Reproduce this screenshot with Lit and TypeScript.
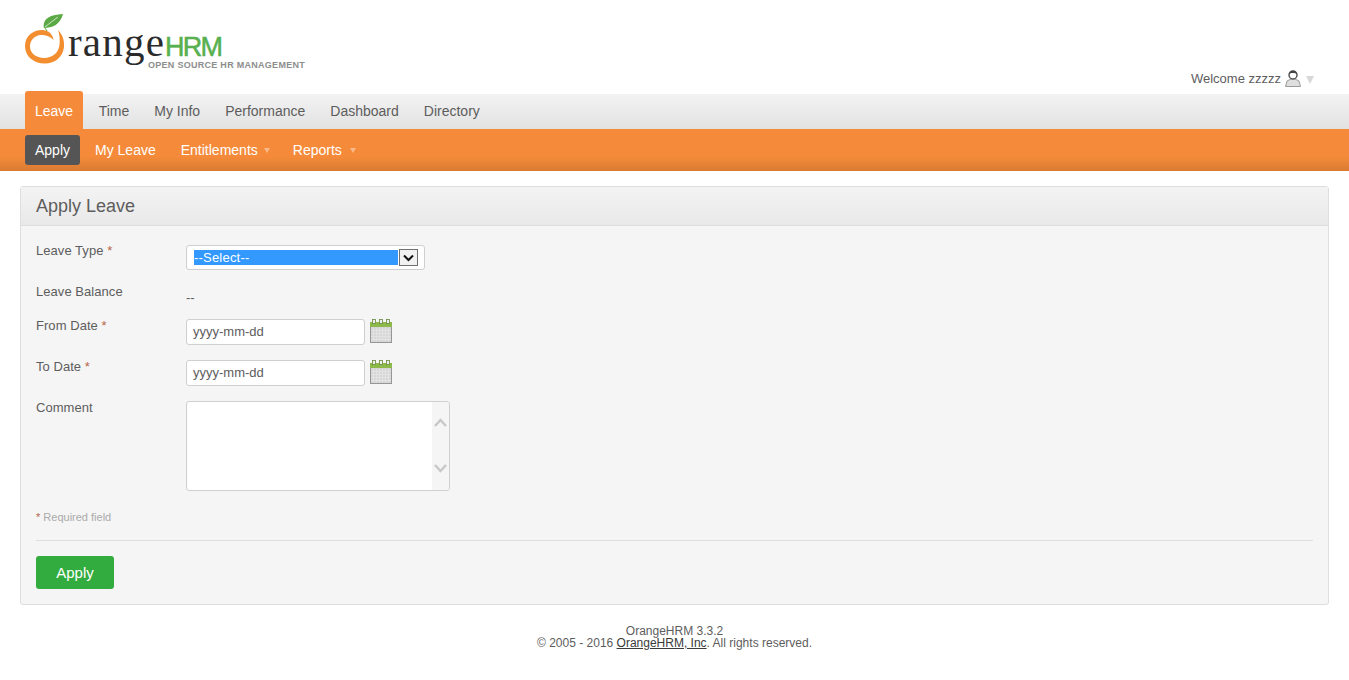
import { css, html, LitElement, svg } from 'lit';
import { customElement } from 'lit/decorators.js';

const topMenu = ['Time', 'My Info', 'Performance', 'Dashboard', 'Directory'];

const logo = svg`
  <svg class="logo" width="290" height="64" viewBox="0 0 290 64">
    <path d="M38 1C30 1.500 21 3 19 10 18.500 12 18.500 13.500 19 15 27 15 35 12 38 1Z" fill="#5aa945"/>
    <path d="M20 14C25 10 29 7 33 4" fill="none" stroke="#fff" stroke-width=".7"/>
    <path d="M20 15 22 18" fill="none" stroke="#5aa945" stroke-width="1"/>
    <path d="M33 17C38 22 39.500 28 39 34 38 44 30 50.500 20 50.500 8 50.500 0 43 0 33 0 23 8 17 17 17 23 17 28 21 28.500 27 25 23 20 21.500 15 22 9 23 5 27.500 5 33.500 5 40 11 45 19 45 27 45 33.500 40 34.500 32 35 26 34.500 21 33 17Z" fill="#f28e2f"/>
    <text x="43" y="43" class="wordmark">range</text>
    <text x="140" y="43" class="hrm">HRM</text>
    <text x="123" y="55" class="tagline">OPEN SOURCE HR MANAGEMENT</text>
  </svg>
`;

const calendar = svg`
  <svg class="cal" width="22" height="24" viewBox="0 0 22 24">
    <rect x=".5" y="4.500" width="21" height="19" fill="#d6d6d6" stroke="#969696"/>
    <g stroke="#e3e3e3" stroke-width="1">
      <path d="M3.500 9v13M6.500 9v13M9.500 9v13M12.500 9v13M15.500 9v13M18.500 9v13M1 11.500h20M1 14.500h20M1 17.500h20M1 20.500h20"/>
    </g>
    <rect x="0" y="3" width="22" height="5" fill="#8db84a"/>
    <g fill="#efefef" stroke="#66883a" stroke-width=".8">
      <rect x="2.500" y=".5" width="3" height="4"/>
      <rect x="9.500" y=".5" width="3" height="4"/>
      <rect x="16.500" y=".5" width="3" height="4"/>
    </g>
  </svg>
`;

@customElement('app-root')
export class AppRoot extends LitElement {
  static override styles = css`
    :host {
      display: block;
      min-height: 680px;
      background: #fff;
      font-family: 'Liberation Sans', Arial, sans-serif;
      color: #5d5d5d;
    }
    .branding {
      height: 94px;
      display: flex;
      justify-content: space-between;
      padding: 13px 35px 0 25px;
      box-sizing: border-box;
    }
    .logo { display: block; }
    .wordmark { font: 41px 'Liberation Serif', serif; fill: #2b2b2b; letter-spacing: 1.200px; }
    .hrm { font: 400 27px 'Liberation Sans', sans-serif; fill: #58b04f; stroke: #58b04f; stroke-width: 0.5px; letter-spacing: -1.700px; }
    .tagline { font: 700 9px 'Liberation Sans', sans-serif; fill: #8d8d8d; letter-spacing: 0.28px; }
    .welcome {
      align-self: flex-end;
      display: flex;
      align-items: center;
      gap: 4px;
      font-size: 13px;
      height: 20px;
      margin-bottom: 6px;
    }
    .arrow-grey {
      width: 0; height: 0;
      margin-left: 1px;
      margin-top: 3px;
      border-left: 4px solid transparent;
      border-right: 4px solid transparent;
      border-top: 8px solid #d8d8d8;
    }
    .top-menu {
      height: 35px;
      background: linear-gradient(#f3f3f3, #e2e2e2);
      display: flex;
      padding-left: 25px;
      font-size: 14px;
    }
    .top-item {
      padding: 0 12.500px;
      line-height: 35px;
      color: #5d5d5d;
    }
    .top-item.active {
      margin-top: -3px;
      height: 38px;
      line-height: 41px;
      padding: 0 10px;
      margin-right: 3px;
      background: #f58b3a;
      color: #fff;
      border-radius: 3px 3px 0 0;
    }
    .sub-menu {
      height: 42px;
      background: linear-gradient(#f58b3a 0, #f58b3a 65%, #d97b32 100%);
      display: flex;
      align-items: flex-start;
      padding: 6px 0 0 25px;
      box-sizing: border-box;
      font-size: 14px;
      color: #fff;
    }
    .sub-item {
      height: 30px;
      line-height: 30px;
      padding: 0 10px 0 15px;
      display: flex;
      align-items: center;
      gap: 6px;
    }
    .sub-item.active {
      background: #555;
      border-radius: 3px;
      padding: 0 10px;
    }
    .sub-item.wide-gap { gap: 8px; }
    .drop {
      width: 0; height: 0;
      margin-right: -2px;
      border-left: 3px solid transparent;
      border-right: 3px solid transparent;
      border-top: 5px solid #f9b98a;
    }
    .panel {
      margin: 15px 20px 0;
      height: 419px;
      box-sizing: border-box;
      border: 1px solid #dedede;
      border-radius: 3px;
      background: #f5f5f5;
    }
    .panel-head {
      height: 39px;
      box-sizing: border-box;
      padding-left: 15px;
      line-height: 38px;
      font-size: 18px;
      color: #5d5d5d;
      background: linear-gradient(#f3f3f3, #e9e9e9);
      border-bottom: 1px solid #dedede;
    }
    .panel-body { padding: 19px 15px 0; font-size: 13px; }
    .row { display: grid; grid-template-columns: 150px 1fr; }
    .row label { line-height: 13px; letter-spacing: 0.05px; }
    .row label.first { margin-top: -1px; }
    .req { color: #b5654a; }
    .select {
      width: 239px;
      height: 25px;
      box-sizing: border-box;
      border: 1px solid #cfcfcf;
      border-radius: 3px;
      background: #fff;
      display: flex;
      align-items: center;
      padding-left: 7px;
    }
    .select-text {
      width: 204px;
      height: 15px;
      line-height: 15px;
      background: #3399ff;
      color: #fff;
      font-size: 13px;
      letter-spacing: 0.2px;
    }
    .select-btn {
      width: 19px;
      height: 17px;
      margin-left: 1px;
      box-sizing: border-box;
      border: 1px solid #707070;
      background: #f2f2f2;
      display: flex;
      align-items: center;
      justify-content: center;
    }
    .balance { height: 49px; }
    .balance label { padding-top: 15px; }
    .balance span { padding-top: 20px; line-height: 15px; }
    .field { display: flex; gap: 5px; }
    .date { height: 26px; margin-bottom: 15px; }
    .date input {
      width: 179px;
      height: 26px;
      box-sizing: border-box;
      border: 1px solid #cfcfcf;
      border-radius: 3px;
      padding: 0 6px 2px;
      font: 13px 'Liberation Sans', sans-serif;
      color: #5d5d5d;
      background: #fff;
    }
    .textarea {
      width: 264px;
      height: 90px;
      box-sizing: border-box;
      border: 1px solid #cfcfcf;
      border-radius: 3px;
      background: #fff;
      display: flex;
      justify-content: flex-end;
      overflow: hidden;
    }
    .scroll {
      width: 17px;
      background: #f5f5f5;
      display: flex;
      flex-direction: column;
      justify-content: space-between;
      align-items: center;
      padding: 16px 0 17px;
      box-sizing: border-box;
    }
    .required { margin-top: 20px; font-size: 11px; line-height: 13px; color: #aaa; }
    hr { border: 0; border-top: 1px solid #dedede; margin: 16px 0 15px; }
    .apply {
      display: block;
      width: 78px;
      height: 33px;
      border: 0;
      border-radius: 3px;
      background: #33ac3f;
      color: #fff;
      font: 15px 'Liberation Sans', sans-serif;
      padding: 0;
    }
    footer {
      margin-top: 20px;
      text-align: center;
      font-size: 12px;
      line-height: 12px;
      color: #5d5d5d;
    }
    footer a { color: #3a3a3a; text-decoration: underline; }
  `;

  override render(): unknown {
    return html`
      <div class="branding">
        ${logo}
        <div class="welcome">
          Welcome zzzzz
          <svg width="16" height="18" viewBox="0 0 16 18">
            <path d="M.5 17.500 2 12 6 10H10L14 12 15.500 17.500Z" fill="#dedede" stroke="#9a9a9a"/>
            <circle cx="8" cy="6" r="4" fill="#fff" stroke="#555" stroke-width="1.500"/>
            <path d="M4 5C4 .5 12 .5 12 5 10 3.500 6 3.500 4 5Z" fill="#444"/>
          </svg>
          <span class="arrow-grey"></span>
        </div>
      </div>
      <nav class="top-menu">
        <div class="top-item active">Leave</div>
        ${topMenu.map((item) => html`<div class="top-item">${item}</div>`)}
      </nav>
      <nav class="sub-menu">
        <div class="sub-item active">Apply</div>
        <div class="sub-item">My Leave</div>
        <div class="sub-item">Entitlements<span class="drop"></span></div>
        <div class="sub-item wide-gap">Reports<span class="drop"></span></div>
      </nav>
      <section class="panel">
        <div class="panel-head">Apply Leave</div>
        <div class="panel-body">
          <div class="row">
            <label class="first">Leave Type <span class="req">*</span></label>
            <div class="select">
              <div class="select-text">--Select--</div>
              <div class="select-btn">
                <svg width="11" height="8" viewBox="0 0 11 8"><path d="M1 1.500 5.500 6 10 1.500" fill="none" stroke="#111" stroke-width="2"/></svg>
              </div>
            </div>
          </div>
          <div class="row balance">
            <label>Leave Balance</label>
            <span>--</span>
          </div>
          <div class="row date">
            <label>From Date <span class="req">*</span></label>
            <div class="field"><input .value=${'yyyy-mm-dd'} />${calendar}</div>
          </div>
          <div class="row date">
            <label>To Date <span class="req">*</span></label>
            <div class="field"><input .value=${'yyyy-mm-dd'} />${calendar}</div>
          </div>
          <div class="row">
            <label>Comment</label>
            <div class="textarea">
              <div class="scroll">
                <svg width="13" height="9" viewBox="0 0 13 9"><path d="M1 8 6.500 2 12 8" fill="none" stroke="#c8c8c8" stroke-width="2.500"/></svg>
                <svg width="13" height="9" viewBox="0 0 13 9"><path d="M1 1 6.500 7 12 1" fill="none" stroke="#c8c8c8" stroke-width="2.500"/></svg>
              </div>
            </div>
          </div>
          <div class="required"><span class="req">*</span> Required field</div>
          <hr />
          <button class="apply">Apply</button>
        </div>
      </section>
      <footer>
        <div>OrangeHRM 3.3.2</div>
        <div>© 2005 - 2016 <a href="#">OrangeHRM, Inc</a>. All rights reserved.</div>
      </footer>
    `;
  }
}
